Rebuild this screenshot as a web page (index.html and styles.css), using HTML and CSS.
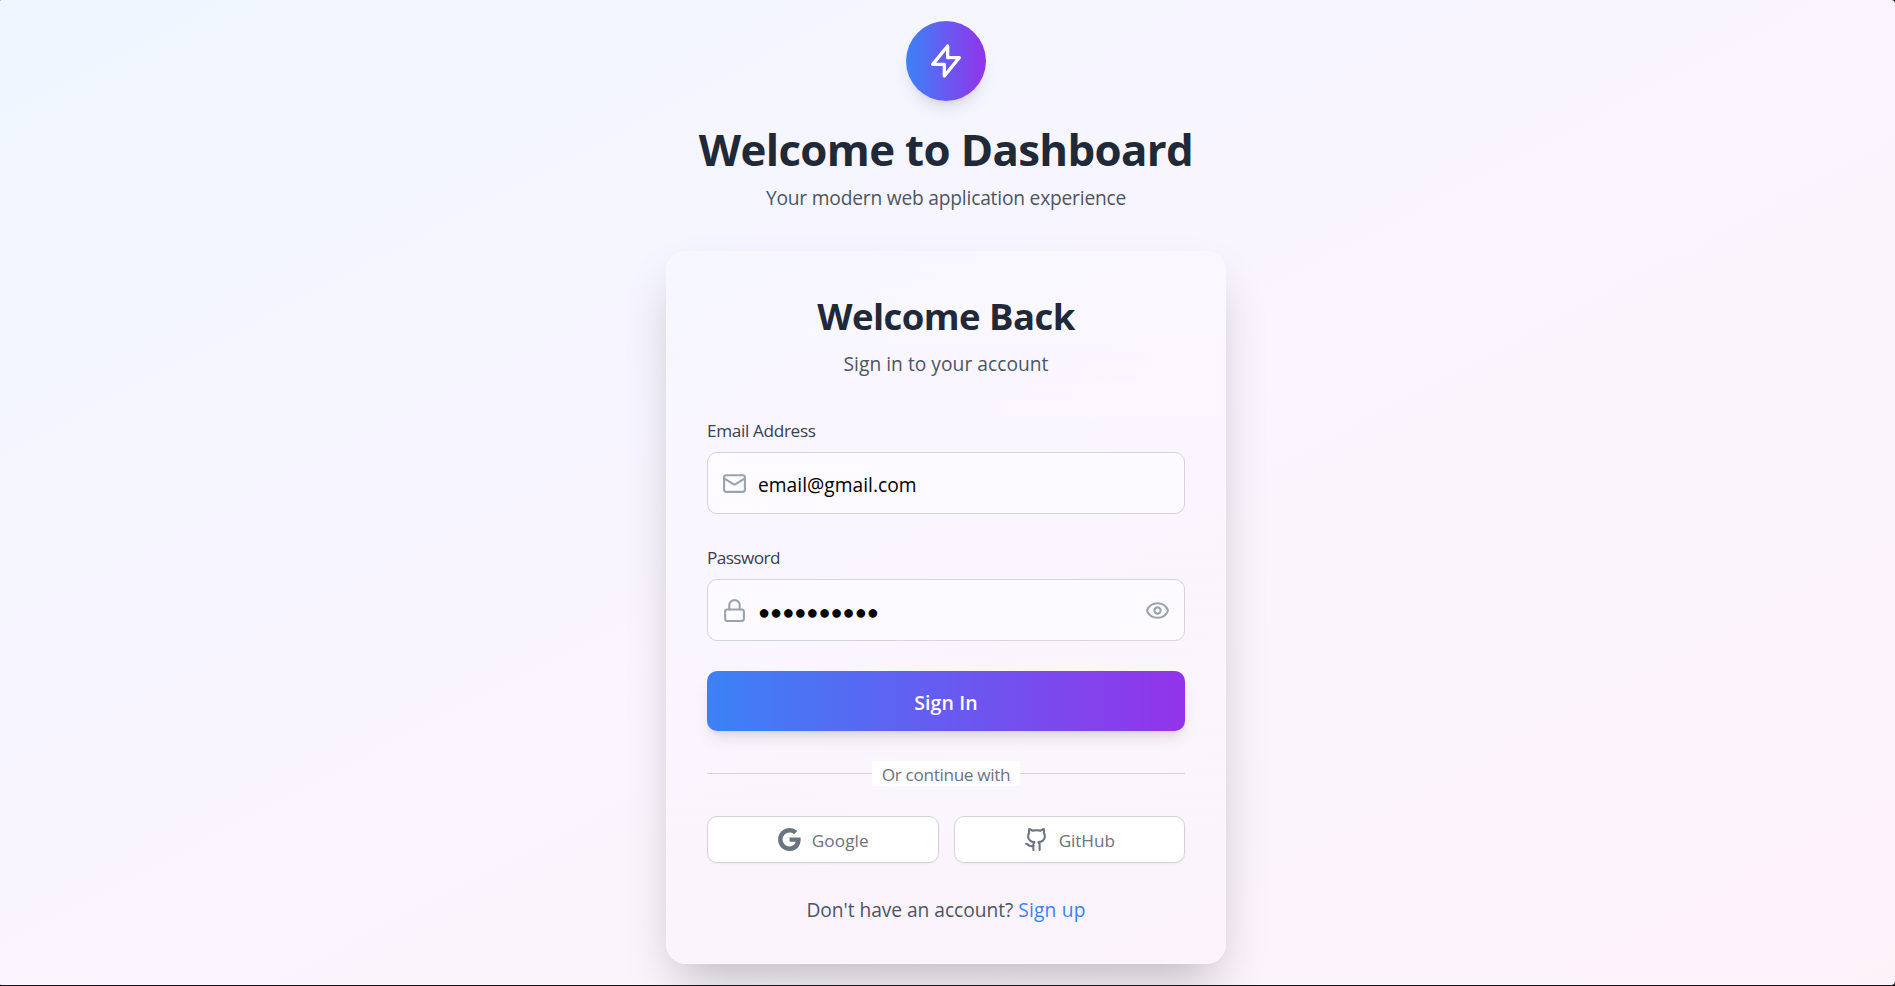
FILE: index.html
```html
<!DOCTYPE html>
<html lang="en">
<head>
<meta charset="utf-8">
<title>Dashboard</title>
<link rel="stylesheet" href="styles.css">
</head>
<body>
<div class="page">
  <main class="container">
    <header class="hero">
      <div class="logo">
        <svg class="logo-icon" viewBox="0 0 24 24"><path d="M13 10V3L4 14h7v7l9-11h-7z"/></svg>
      </div>
      <h1 class="title">Welcome to Dashboard</h1>
      <p class="lead">Your modern web application experience</p>
    </header>
    <section class="card">
      <div class="card-head">
        <h2 class="card-title">Welcome Back</h2>
        <p class="card-sub">Sign in to your account</p>
      </div>
      <form class="form">
        <div class="field">
          <div class="label label-email">Email Address</div>
          <div class="control">
            <svg class="icon" viewBox="0 0 24 24"><rect x="2" y="4" width="20" height="16" rx="2"/><path d="m22 7-8.97 5.7a1.94 1.94 0 0 1-2.06 0L2 7"/></svg>
            <div class="value">email@gmail.com</div>
          </div>
        </div>
        <div class="field">
          <div class="label label-password">Password</div>
          <div class="control">
            <svg class="icon" viewBox="0 0 24 24"><rect x="3" y="11" width="18" height="11" rx="2"/><path d="M7 11V7a5 5 0 0 1 10 0v4"/></svg>
            <div class="value dots">●●●●●●●●●●</div>
            <svg class="icon" viewBox="0 0 24 24"><path d="M2.062 12.348a1 1 0 0 1 0-.696 10.75 10.75 0 0 1 19.876 0 1 1 0 0 1 0 .696 10.75 10.75 0 0 1-19.876 0"/><circle cx="12" cy="12" r="3"/></svg>
          </div>
        </div>
        <button class="submit" type="button">Sign In</button>
      </form>
      <div class="divider"><span class="divider-text">Or continue with</span></div>
      <div class="social">
        <button class="social-btn" type="button">
          <svg class="brand brand-solid" viewBox="1.6 1.15 21.7 21.7"><path d="M12.545 10.239v3.821h5.445c-.712 2.315-2.647 3.972-5.445 3.972a6.033 6.033 0 1 1 0-12.064c1.498 0 2.866.549 3.921 1.453l2.814-2.814A9.969 9.969 0 0 0 12.545 2C7.021 2 2.543 6.477 2.543 12s4.478 10 10.002 10c8.396 0 10.249-7.85 9.426-11.748z"/></svg>
          <span class="google">Google</span>
        </button>
        <button class="social-btn" type="button">
          <svg class="brand" viewBox="0 0 24 24"><path d="M15 22v-4a4.8 4.8 0 0 0-1-3.5c3 0 6-2 6-5.5.08-1.25-.27-2.48-1-3.5.28-1.15.28-2.35 0-3.5 0 0-1 0-3 1.5-2.64-.5-5.36-.5-8 0C6 2 5 2 5 2c-.3 1.15-.3 2.35 0 3.5A5.403 5.403 0 0 0 4 9c0 3.5 3 5.5 6 5.5-.39.49-.68 1.05-.85 1.65-.17.6-.22 1.23-.15 1.85v4"/><path d="M9 18c-4.51 2-5-2-7-2"/></svg>
          <span class="github">GitHub</span>
        </button>
      </div>
      <p class="signup">Don't have an account? <a class="link" href="#">Sign up</a></p>
    </section>
  </main>
</div>
</body>
</html>
```
FILE: styles.css
```css
* { box-sizing: border-box; }
html { background: #12131f; }
body {
  margin: 0;
  font-family: "Open Sans", "Noto Sans", sans-serif;
  font-size: 19.2px;
  line-height: 30px;
  overflow: hidden;
}
h1, h2, p { margin: 0; }
svg { display: block; flex: none; fill: none; stroke: currentColor; stroke-width: 2; stroke-linecap: round; stroke-linejoin: round; }

.page {
  height: 985px;
  padding-right: 3px;
  display: flex;
  justify-content: center;
  align-items: center;
  overflow: hidden;
  border-radius: 1px 4px 4px 1px;
  background: linear-gradient(to bottom right, #eff6ff, #faf5ff, #fdf2f8);
}
.container { width: 560px; }

.hero { text-align: center; margin-bottom: 40px; }
.logo {
  width: 80px;
  height: 80px;
  margin: 0 auto 20px;
  display: flex;
  align-items: center;
  justify-content: center;
  border-radius: 50%;
  color: #fff;
  background: linear-gradient(to right, #3b82f6, #9333ea);
  box-shadow: 0 10px 15px -3px rgba(0,0,0,.1), 0 4px 6px -4px rgba(0,0,0,.1);
}
.logo-icon { width: 40px; height: 40px; }
.title {
  padding-top: 6px;
  margin-bottom: 10px;
  font-size: 43.8px;
  line-height: 44px;
  letter-spacing: -.65px;
  color: #1f2937;
}
.lead, .card-sub, .signup { padding-top: 4px; line-height: 26px; color: #4b5563; }
.lead { letter-spacing: -.2px; }

.card {
  padding: 40px;
  border: 1px solid rgba(255,255,255,.2);
  border-radius: 20px;
  background: linear-gradient(rgba(255,255,255,.2), rgba(255,255,255,.06));
  box-shadow: 0 25px 50px -12px rgba(0,0,0,.25);
}
.card-head { text-align: center; margin-bottom: 40px; }
.card-title {
  padding-top: 3px;
  margin-bottom: 10px;
  font-size: 36.5px;
  line-height: 42px;
  letter-spacing: -.56px;
  color: #1f2937;
}
.card-sub { letter-spacing: .03px; }

.form { display: flex; flex-direction: column; gap: 30px; }
.label {
  padding-top: 3px;
  margin-bottom: 10px;
  font-size: 17.2px;
  line-height: 22px;
  color: #374151;
}
.label-email { letter-spacing: -.35px; }
.label-password { letter-spacing: -.58px; }
.control {
  height: 62px;
  padding: 0 14px;
  display: flex;
  align-items: center;
  gap: 10px;
  border: 1px solid #d1d5db;
  border-radius: 10px;
  background: rgba(255,255,255,.6);
}
.icon { width: 25px; height: 25px; color: #9ca3af; }
.value { flex: 1; padding: 4px 0 0 1px; line-height: 26px; letter-spacing: .03px; color: #000; }
.dots { font-size: 20px; letter-spacing: 0; }
.submit {
  height: 60px;
  padding: 3px 0 0;
  border: 0;
  border-radius: 10px;
  font: 600 19.5px/28px "Open Sans", sans-serif;
  letter-spacing: .1px;
  color: #fff;
  background: linear-gradient(to right, #3b82f6, #9333ea);
  box-shadow: 0 10px 15px -3px rgba(0,0,0,.1), 0 4px 6px -4px rgba(0,0,0,.1);
}

.divider { display: flex; align-items: center; margin-top: 30px; }
.divider::before, .divider::after { content: ""; flex: 1; height: 1px; background: #d1d5db; }
.divider-text {
  width: 148px;
  padding-top: 3px;
  text-align: center;
  font-size: 17.2px;
  line-height: 22px;
  letter-spacing: -.33px;
  color: #6b7280;
  background: #fff;
}

.social { display: grid; grid-template-columns: 1fr 1fr; gap: 15px; margin-top: 30px; }
.social-btn {
  height: 47px;
  padding: 0;
  display: flex;
  align-items: center;
  justify-content: center;
  gap: 10px;
  border: 1px solid #d1d5db;
  border-radius: 10px;
  font: 17.2px/22px "Open Sans", sans-serif;
  color: #6b7280;
  background: #fff;
  box-shadow: 0 1px 2px rgba(0,0,0,.05);
}
.social-btn span { padding-top: 3px; }
.brand { width: 25px; height: 25px; }
.brand-solid { fill: currentColor; stroke: none; }
.google { letter-spacing: .1px; }
.github { letter-spacing: -.1px; }

.signup { margin-top: 30px; text-align: center; letter-spacing: -.04px; }
.link { color: #3b82f6; text-decoration: none; letter-spacing: .2px; }
```
